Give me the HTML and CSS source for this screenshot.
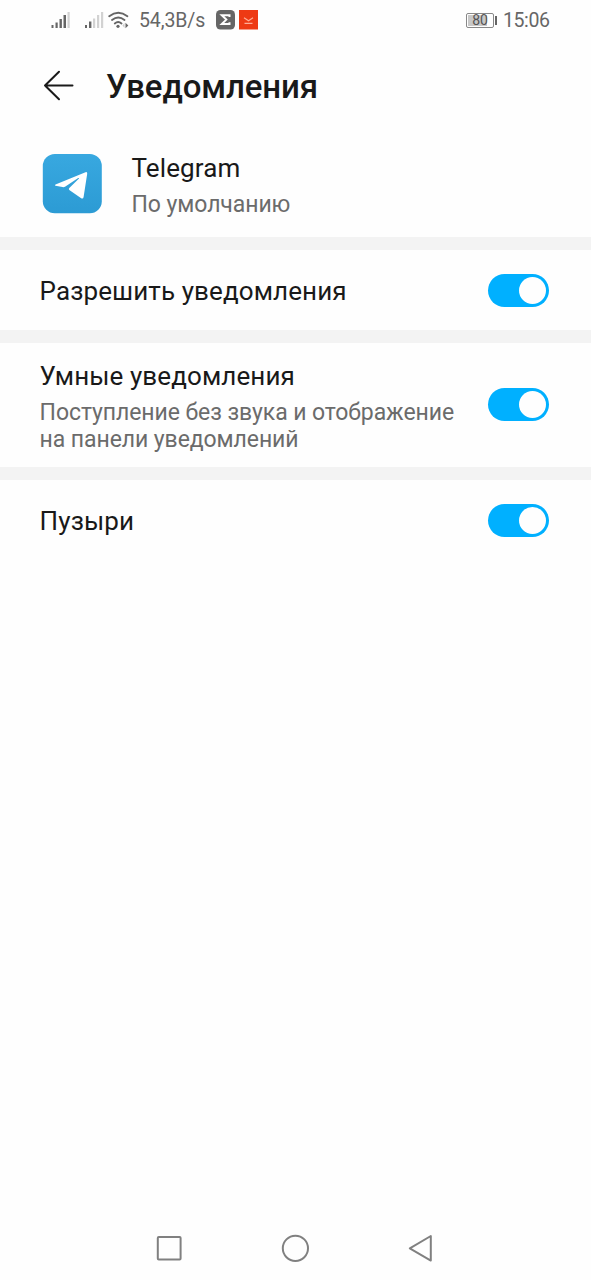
FILE: index.html
```html
<!DOCTYPE html>
<html lang="ru">
<head>
<meta charset="utf-8">
<title>Уведомления</title>
<link rel="stylesheet" href="styles.css">
</head>
<body>
<div class="screen">
  <div class="status">
    <svg class="signals" width="80" height="40" viewBox="50 0 80 40">
      <g fill="#666">
        <rect x="51.500" y="25" width="2" height="3"/><rect x="55.500" y="22.500" width="2.200" height="5.500"/><rect x="59.500" y="19" width="2.400" height="9"/><rect x="63.500" y="15" width="2.500" height="13"/>
        <rect x="85" y="25" width="2" height="3"/><rect x="89" y="21.500" width="2.400" height="6.500"/>
      </g>
      <g fill="#d2d2d2">
        <rect x="67.500" y="12" width="2.200" height="16"/><rect x="93" y="18.500" width="2.200" height="9.500"/><rect x="97" y="15" width="2.200" height="13"/><rect x="101" y="12" width="2.200" height="16"/>
      </g>
      <g fill="none" stroke="#666" stroke-width="1.900" stroke-linecap="round">
        <path d="M109.200 16.200Q118.300 9.300 127.400 16.200"/><path d="M112 20Q118.300 15.200 124.500 20"/><path d="M114.800 23.400Q118.200 20.800 121.500 23.400"/>
      </g>
      <circle cx="118" cy="26.300" r="1.600" fill="#666"/>
      <path d="M125.500 22.800L128.300 25.500L125.500 28.200Z" fill="#666"/><path d="M124.500 23L122.500 25.500L124.500 28Z" fill="#ccc"/>
    </svg>
    <span class="speed">54,3B/s</span>
    <svg class="apps" width="43" height="40" viewBox="216 0 43 40">
      <rect x="216" y="10" width="19" height="19.500" rx="4.500" fill="#666"/>
      <path d="M229.500 17V15.300H221.800L226.300 19.600L221.800 24H229.500V22.300" fill="none" stroke="#fff" stroke-width="2"/>
      <rect x="239" y="10" width="19" height="19.500" fill="#ee3a14"/>
      <path d="M244 17.700L248.500 20.700L253 17.700M244.500 23.300H252.500" fill="none" stroke="#ffad96" stroke-width="1.200"/>
    </svg>
    <span class="battery"><span class="charge">80</span></span>
    <span class="clock">15:06</span>
  </div>
  <header class="header">
    <svg class="back" width="32" height="32" viewBox="42 69.800 32 32" fill="none" stroke="#1a1a1a" stroke-width="2" stroke-linecap="round" stroke-linejoin="round"><path d="M72.500 85.300H45M59 71.500L45 85.300L59 99"/></svg>
    <h1 class="title">Уведомления</h1>
  </header>
  <section class="app">
    <svg class="logo" width="60" height="60" viewBox="42 154 60 60">
      <defs><linearGradient id="sky" x1="0" y1="0" x2="0" y2="1"><stop offset="0" stop-color="#38a8e0"/><stop offset="1" stop-color="#2c9bd4"/></linearGradient></defs>
      <rect x="42.800" y="154" width="59" height="59.300" rx="12" fill="url(#sky)"/>
      <path d="M55.500 184.400L85.500 172.200Q87.400 171.600 87.200 173.700L83.600 197.100Q83.100 199.400 81.200 198.200L69.300 190.100Q68.300 189.200 69.300 188.100L79 178.500Q79.100 177.700 78.200 178.100L65 186.700Q63.800 187.400 62.400 187L55.500 185.700Q54.300 185 55.500 184.400Z" fill="#fff"/>
    </svg>
    <div>
      <div class="label name">Telegram</div>
      <div class="note mode">По умолчанию</div>
    </div>
  </section>
  <section class="row allow">
    <div class="label permit">Разрешить уведомления</div>
    <span class="toggle"></span>
  </section>
  <section class="row smart">
    <div>
      <div class="label clever">Умные уведомления</div>
      <div class="note">Поступление без звука и отображение<br>на панели уведомлений</div>
    </div>
    <span class="toggle"></span>
  </section>
  <section class="row bubbles">
    <div class="label">Пузыри</div>
    <span class="toggle"></span>
  </section>
  <nav class="nav">
    <svg width="280" height="32" viewBox="155 1232 280 32" fill="none" stroke="#808080" stroke-width="2" stroke-linejoin="round">
      <rect x="157.800" y="1237" width="22.800" height="22.500" rx="1"/>
      <circle cx="295.400" cy="1248.300" r="12.600"/>
      <path d="M409.800 1248.300L430.800 1236V1260.600Z"/>
    </svg>
  </nav>
</div>
</body>
</html>
```
FILE: styles.css
```css
* { box-sizing: border-box; }
body { margin: 0; background: #fefefe; font-family: Roboto, "Noto Sans", sans-serif; color: #191919; }
.screen { width: 591px; height: 1280px; display: flex; flex-direction: column; }
.status { height: 40px; padding: 0 42px 0 50px; display: flex; align-items: center; color: #666; font-size: 19.5px; }
.signals, .apps, .back, .logo { flex: none; display: block; }
.speed { margin-left: 9px; padding-top: 1px; width: 77px; letter-spacing: -0.1px; white-space: nowrap; }
.battery { margin-left: auto; display: flex; align-items: center; width: 32px; }
.battery::after { content: ""; width: 2px; height: 9px; margin-left: 1px; background: #666; }
.charge { width: 28px; height: 15px; border: 1px solid #888; border-radius: 2px; background: linear-gradient(90deg, #c8c8c8 80%, #fefefe 80%) content-box; padding: 1px; font-size: 14px; line-height: 11px; text-align: center; color: #555; }
.clock { margin-left: 5px; padding-top: 1px; width: 46px; letter-spacing: -0.4px; white-space: nowrap; }
.header { height: 92px; padding-left: 42px; display: flex; align-items: center; gap: 32px; }
.title { margin: 2px 0 0; font-size: 33px; line-height: 40px; font-weight: 500; letter-spacing: -0.1px; }
.app { height: 105px; padding: 18px 0 0 42px; display: flex; gap: 29.5px; align-items: flex-start; }
.logo { margin-top: 4px; }
.label { font-size: 26px; line-height: 36px; letter-spacing: 0.1px; white-space: nowrap; }
.note { font-size: 23px; line-height: 27px; letter-spacing: -0.08px; color: #6b6b6b; white-space: nowrap; }
.mode { margin-top: 5px; }
.row { border-top: 13px solid #f3f3f3; padding: 0 42px 0 39.6px; display: flex; align-items: center; justify-content: space-between; }
.allow { height: 93px; }
.permit { padding-top: 2px; }
.smart { height: 137px; }
.bubbles { height: 94px; }
.clever { margin-bottom: 5px; }
.toggle { flex: none; width: 61px; height: 33px; padding: 3px; border-radius: 17px; background: #00b0ff; display: flex; justify-content: flex-end; }
.toggle::before { content: ""; width: 27px; height: 27px; border-radius: 50%; background: #fefefe; }
.smart .toggle { margin-bottom: 1px; }
.nav { margin-top: auto; height: 48px; padding-left: 155px; }
.nav svg { display: block; }
```
